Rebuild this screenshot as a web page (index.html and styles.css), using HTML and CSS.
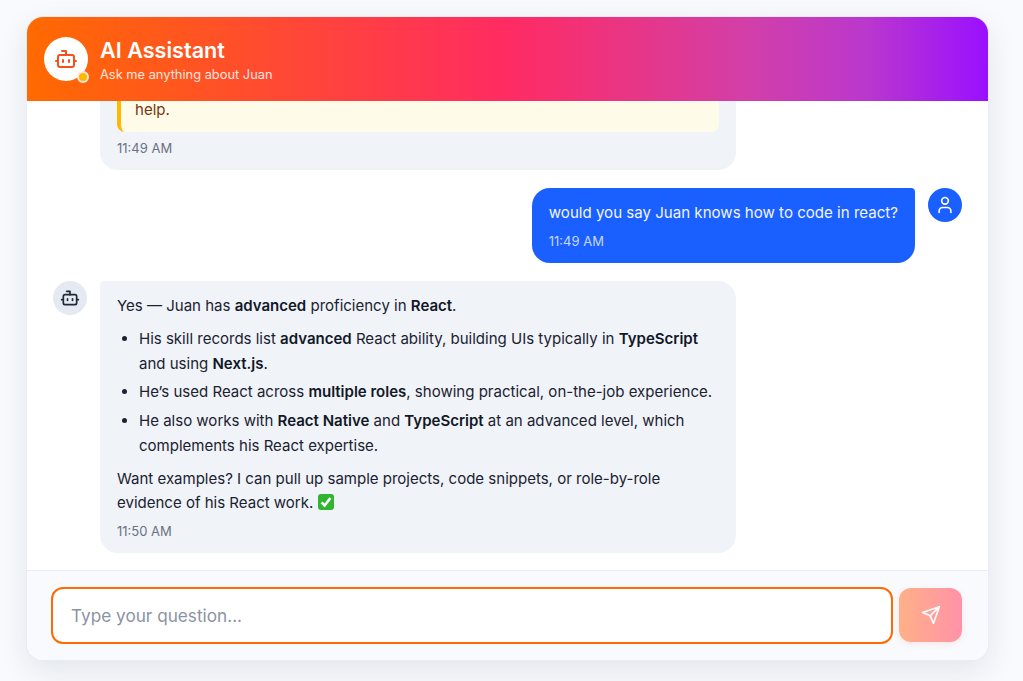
FILE: index.html
```
<!DOCTYPE html>
<html lang="en">
<head>
<meta charset="utf-8">
<title>AI Assistant</title>
<link rel="stylesheet" href="styles.css">
</head>
<body>
<main class="card">
  <header class="head">
    <div class="head-avatar">
      <svg class="ico ico-24" viewBox="0 0 24 24"><path d="M12 8V4H8"/><rect width="16" height="12" x="4" y="8" rx="2"/><path d="M2 14h2"/><path d="M20 14h2"/><path d="M15 13v2"/><path d="M9 13v2"/></svg>
      <span class="status"></span>
    </div>
    <div class="head-text">
      <h1 class="title">AI Assistant</h1>
      <p class="subtitle">Ask me anything about Juan</p>
    </div>
  </header>
  <section class="messages">
    <div class="row">
      <div class="avatar avatar-ghost"></div>
      <div class="bubble bubble-bot">
        <div class="note">help.</div>
        <div class="time time-note">11:49 AM</div>
      </div>
    </div>
    <div class="row row-user">
      <div class="bubble bubble-user">
        <p class="para">would you say Juan knows how to code in react?</p>
        <div class="time time-user">11:49 AM</div>
      </div>
      <div class="avatar avatar-user">
        <svg class="ico ico-20" viewBox="0 0 24 24"><path d="M19 21v-2a4 4 0 0 0-4-4H9a4 4 0 0 0-4 4v2"/><circle cx="12" cy="7" r="4"/></svg>
      </div>
    </div>
    <div class="row">
      <div class="avatar avatar-bot">
        <svg class="ico ico-20" viewBox="0 0 24 24"><path d="M12 8V4H8"/><rect width="16" height="12" x="4" y="8" rx="2"/><path d="M2 14h2"/><path d="M20 14h2"/><path d="M15 13v2"/><path d="M9 13v2"/></svg>
      </div>
      <div class="bubble bubble-bot">
        <p class="para">Yes — Juan has <strong>advanced</strong> proficiency in <strong>React</strong>.</p>
        <ul class="list">
          <li>His skill records list <strong>advanced</strong> React ability, building UIs typically in <strong>TypeScript</strong> and using <strong>Next.js</strong>.</li>
          <li>He’s used React across <strong>multiple roles</strong>, showing practical, on-the-job experience.</li>
          <li>He also works with <strong>React Native</strong> and <strong>TypeScript</strong> at an advanced level, which complements his React expertise.</li>
        </ul>
        <p class="para">Want examples? I can pull up sample projects, code snippets, or role-by-role evidence of his React work. <svg class="check" viewBox="0 0 16 16"><rect width="16" height="16" rx="3" fill="#2fb52f"/><path d="M3.6 8.4 6.6 11.6 12.4 4" fill="none" stroke="#fff" stroke-width="2.6"/></svg></p>
        <div class="time">11:50 AM</div>
      </div>
    </div>
  </section>
  <footer class="foot">
    <input class="field" type="text" placeholder="Type your question...">
    <button class="send" type="button" aria-label="Send">
      <svg class="ico ico-20" viewBox="0 0 24 24"><path d="m22 2-7 20-4-9-9-4Z"/><path d="M22 2 11 13"/></svg>
    </button>
  </footer>
</main>
</body>
</html>
```
FILE: styles.css
```
* { box-sizing: border-box; }
html, body { height: 100%; margin: 0; }
body {
  background: #f8fafd;
  padding: 17px 35px 21px 27px;
  font-family: Inter, "Liberation Sans", sans-serif;
  color: #1a2230;
  overflow: hidden;
}
.card {
  height: 100%;
  display: flex;
  flex-direction: column;
  background: #fff;
  border-radius: 16px;
  overflow: hidden;
  box-shadow: 0 0 0 1px #e8ecf4, 0 10px 30px rgba(30, 40, 70, .1);
}
.ico { fill: none; stroke: currentColor; stroke-width: 2; stroke-linecap: round; stroke-linejoin: round; display: block; }
.ico-24 { width: 24px; height: 24px; }
.ico-20 { width: 20px; height: 20px; }
.head {
  flex: none;
  height: 84px;
  display: flex;
  align-items: center;
  gap: 12px;
  padding: 0 17px;
  color: #fff;
  background: linear-gradient(90deg, #ff6a00 0%, #ff2b62 50%, #d23fa8 75%, #bb38cc 87%, #9a10ff 100%);
  position: relative;
  z-index: 1;
}
.head-avatar {
  width: 44px;
  height: 44px;
  border-radius: 50%;
  background: #fff;
  color: #f4511e;
  display: flex;
  align-items: center;
  justify-content: center;
  position: relative;
}
.status {
  position: absolute;
  right: -1px;
  bottom: -2px;
  width: 12px;
  height: 12px;
  border-radius: 50%;
  background: #ffb800;
  border: 2px solid #ffe9d6;
}
.title { margin: 0; font-size: 21.6px; line-height: 28px; font-weight: 600; }
.subtitle { margin: 3px 0 0; font-size: 12.85px; line-height: 16px; opacity: .85; }
.messages {
  flex: 1;
  min-height: 0;
  display: flex;
  flex-direction: column;
  justify-content: flex-end;
  gap: 18px;
  padding: 0 26px 17px;
  overflow: hidden;
}
.row { flex: none; display: flex; align-items: flex-start; gap: 13px; }
.row-user { justify-content: flex-end; }
.avatar {
  flex: none;
  width: 34px;
  height: 34px;
  border-radius: 50%;
  display: flex;
  align-items: center;
  justify-content: center;
}
.avatar-ghost { background: transparent; }
.avatar-bot { background: #e5e9f1; color: #1f2937; }
.avatar-user { background: #1a5fff; color: #fff; }
.bubble {
  padding: 13px 17px 12px;
  font-size: 15.03px;
  line-height: 24.75px;
}
.bubble-bot {
  width: 636px;
  background: #f0f3f8;
  border-radius: 4px 18px 18px 18px;
}
.bubble-user {
  font-size: 15.08px;
  background: #1a5fff;
  color: #f1f5ff;
  border-radius: 18px 4px 18px 18px;
}
.para { margin: 0; }
.list { margin: 8px 0; padding-left: 22px; }
.list li + li { margin-top: 4px; }
.list strong, .para strong { font-weight: 600; color: #111827; }
.check { width: 16px; height: 16px; vertical-align: -2px; }
.note {
  padding: 16px 14px 10px;
  background: #fffbe9;
  border-left: 4px solid #ffb800;
  border-radius: 8px;
  color: #78350f;
}
.time { margin-top: 5px; font-size: 13px; line-height: 20px; color: #6b7280; }
.time-note { margin-top: 6px; }
.time-user { color: #c6d7ff; }
.foot {
  flex: none;
  height: 90px;
  display: flex;
  align-items: center;
  gap: 6px;
  padding: 0 26px 0 24px;
  background: #f8fafd;
  border-top: 1px solid #e8ecf4;
}
.field {
  flex: 1;
  height: 57px;
  padding: 0 18px;
  border: 2px solid #ff6b00;
  border-radius: 12px;
  background: #fff;
  font: inherit;
  font-size: 17.2px;
  outline: none;
}
.field::placeholder { color: #8b93a3; }
.send {
  flex: none;
  width: 63px;
  height: 54px;
  margin-bottom: 1px;
  border: 0;
  border-radius: 12px;
  background: linear-gradient(90deg, #ffb088, #ff92a8);
  color: #fff;
  display: flex;
  align-items: center;
  justify-content: center;
  box-shadow: 0 2px 6px rgba(255, 120, 100, .15);
}
```
